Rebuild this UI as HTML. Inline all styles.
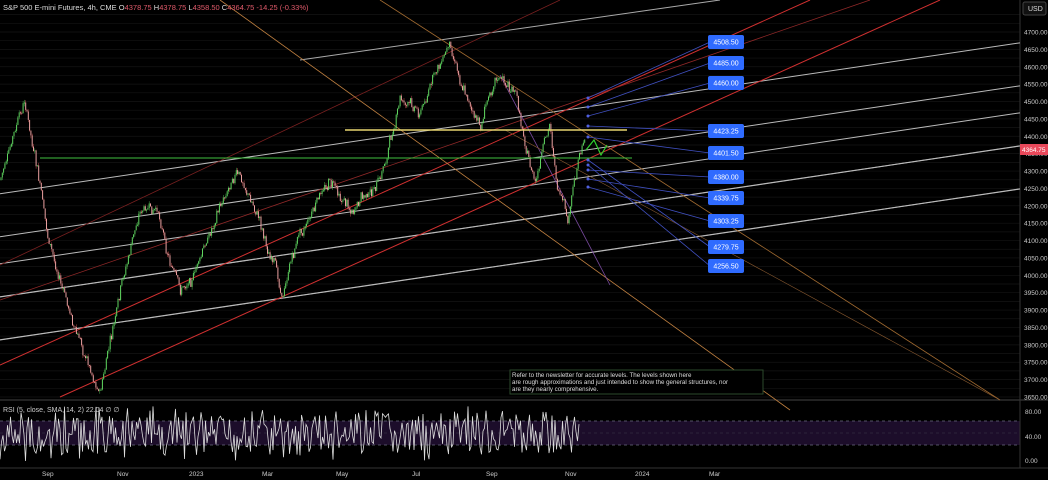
<!DOCTYPE html>
<html><head><meta charset="utf-8"><style>
html,body{margin:0;padding:0;background:#000;width:1048px;height:480px;overflow:hidden;font-family:"Liberation Sans",sans-serif}
svg{display:block}
</style></head><body>
<svg id="s" width="1048" height="480" xmlns="http://www.w3.org/2000/svg" font-family="Liberation Sans, sans-serif">
<rect width="1048" height="480" fill="#000"/>
<g id="grid"></g>
<rect x="0" y="421" width="1020" height="24" fill="#1c0d2a"/>
<line x1="0" y1="421" x2="1020" y2="421" stroke="#6a6a80" stroke-dasharray="3,3" stroke-width="0.8"/>
<line x1="0" y1="433" x2="1020" y2="433" stroke="#3a3a4a" stroke-dasharray="3,3" stroke-width="0.6"/>
<line x1="0" y1="445" x2="1020" y2="445" stroke="#6a6a80" stroke-dasharray="3,3" stroke-width="0.8"/>
<line x1="0" y1="400" x2="1048" y2="400" stroke="#444" stroke-width="1"/>
<line x1="1020" y1="0" x2="1020" y2="468" stroke="#333" stroke-width="1"/>
<line x1="0" y1="468" x2="1048" y2="468" stroke="#333" stroke-width="1"/>
<g id="lines" fill="none"></g>
<g id="candles"></g>
<polyline id="rsi" fill="none" stroke="#ddd" stroke-width="0.8"/>
<line x1="345" y1="130" x2="627" y2="130" stroke="#e8d670" stroke-width="1.5"/>
<line x1="40" y1="158" x2="632" y2="158" stroke="#3fbf3f" stroke-width="1"/>
<polyline points="586,150 594,140 601,155 607,145" fill="none" stroke="#2fd02f" stroke-width="1.2"/>
<g id="labels"></g>
<g id="axis" font-size="6.5" fill="#ccc"></g>
<text x="3" y="10" font-size="7.5" fill="#ddd">S&amp;P 500 E-mini Futures, 4h, CME <tspan>O</tspan><tspan fill="#e05a6a">4378.75 </tspan>H<tspan fill="#e05a6a">4378.75 </tspan>L<tspan fill="#e05a6a">4358.50 </tspan>C<tspan fill="#e05a6a">4364.75  -14.25 (-0.33%)</tspan></text>
<rect x="1023" y="2" width="23" height="13" rx="2" fill="#111" stroke="#444"/>
<text x="1028" y="11" font-size="7" fill="#ddd">USD</text>
<rect x="1020" y="144" width="28" height="11" fill="#e8485a"/>
<text x="1022" y="152" font-size="6.5" fill="#fff">4364.75</text>
<rect x="510" y="370" width="253" height="24" fill="#000" stroke="#2c4a2c"/>
<text font-size="6.2" fill="#ddd"><tspan x="512" y="377">Refer to the newsletter for accurate levels. The levels shown here</tspan><tspan x="512" y="384">are rough approximations and just intended to show the general structures, nor</tspan><tspan x="512" y="391">are they nearly comprehensive.</tspan></text>
<text x="3" y="412" font-size="7" fill="#ccc">RSI (5, close, SMA, 14, 2)  22.04  ∅  ∅</text>
</svg>
<script>
(function(){
var NS="http://www.w3.org/2000/svg";
function el(t,a,p){var e=document.createElementNS(NS,t);for(var k in a)e.setAttribute(k,a[k]);document.getElementById(p).appendChild(e);return e;}
function Y(p){return 32+(4700-p)*0.3476;}
for(var p=3650;p<=4750;p+=25){el('line',{x1:0,y1:Y(p),x2:1020,y2:Y(p),stroke:'#141414','stroke-width':0.7},'grid');}
for(var p=3650;p<=4700;p+=50){var t=el('text',{x:1024,y:Y(p)+2.5},'axis');t.textContent=p.toFixed(2);}
[[80,414],[40,439],[0,463]].forEach(function(a){var t=el('text',{x:1025,y:a[1]},'axis');t.textContent=a[0].toFixed(2);});
[["Sep",42],["Nov",117],["2023",189],["Mar",262],["May",336],["Jul",412],["Sep",486],["Nov",565],["2024",635],["Mar",709]].forEach(function(a){var t=el('text',{x:a[1],y:476},'axis');t.textContent=a[0];});
function L(x1,y1,x2,y2,c,w){el('line',{x1:x1,y1:y1,x2:x2,y2:y2,stroke:c,'stroke-width':w||1},'lines');}
var s=-0.148;
[[340],[297],[251+600*0.148],[208+600*0.148],[175+600*0.148],[148+600*0.148],[105+600*0.148]].forEach(function(a){L(0,a[0],1020,a[0]+s*1020,'#bbbbbb',1);});
L(300,60,720,0,'#aaa',1);
L(0,265,560,0,'#7a2020',0.8);
L(0,365,810,0,'#d03030',1);
L(60,397,940,0,'#d03030',1);
L(0,300,870,0,'#902828',0.8);
L(220,0,790,410,'#c08040',0.8);
L(380,0,1000,400,'#a06a30',0.8);
L(500,75,610,285,'#7a4aa0',0.8);
L(505,130,1000,400,'#8a5a30',0.6);
var bl=[[98,42],[107,63],[116,83],[126,131],[137,153],[170,177],[179,198],[187,221],[160,247],[165,266]];
bl.forEach(function(b){L(588,b[0],710,b[1],'#4050c0',0.8);el('circle',{cx:588,cy:b[0],r:1.5,fill:'#5060e0'},'lines');});
[["4508.50",42],["4485.00",63],["4460.00",83],["4423.25",131],["4401.50",153],["4380.00",177],["4339.75",198],["4303.25",221],["4279.75",247],["4256.50",266]].forEach(function(a){
el('rect',{x:708,y:a[1]-7,width:36,height:14,rx:2,fill:'#2f6bff'},'labels');
var t=el('text',{x:726,y:a[1]+2.5,'font-size':7,fill:'#fff','text-anchor':'middle'},'labels');t.textContent=a[0];});
var K=[[0,180],[25,105],[50,250],[75,330],[100,390],[120,300],[140,210],[160,220],[180,295],[200,260],[235,165],[260,220],[282,295],[300,230],[330,180],[355,210],[380,185],[400,100],[420,110],[450,42],[470,100],[480,130],[495,70],[515,95],[535,185],[550,130],[558,190],[568,230],[580,150],[585,140]];
function yAt(x){for(var i=0;i<K.length-1;i++){if(x<=K[i+1][0]){var a=K[i],b=K[i+1];return a[1]+(b[1]-a[1])*(x-a[0])/(b[0]-a[0]);}}return 140;}
var seed=7;function r(){seed=(seed*9301+49297)%233280;return seed/233280;}
var prev=yAt(0),drift=0;
for(var x=1;x<585;x+=1.3){drift=drift*0.85+(r()-0.5)*8;var y=yAt(x)+drift+(r()-0.5)*8;var up=y<prev;var tp=Math.min(y,prev),h=Math.max(1,Math.abs(y-prev));
el('line',{x1:x,y1:tp-r()*3,x2:x,y2:tp+h+r()*3,stroke:up?'#4caf50':'#c05050','stroke-width':0.5},'candles');
el('rect',{x:x-0.5,y:tp,width:1,height:h,fill:up?'#5fd45f':'#e8a0a0'},'candles');prev=y;}
var pts=[];for(var x=0;x<580;x+=1.5){pts.push(x+','+(434+(r()-0.5)*2*(16+r()*14)).toFixed(1));}
document.getElementById('rsi').setAttribute('points',pts.join(' '));
})();
</script>
</body></html>
